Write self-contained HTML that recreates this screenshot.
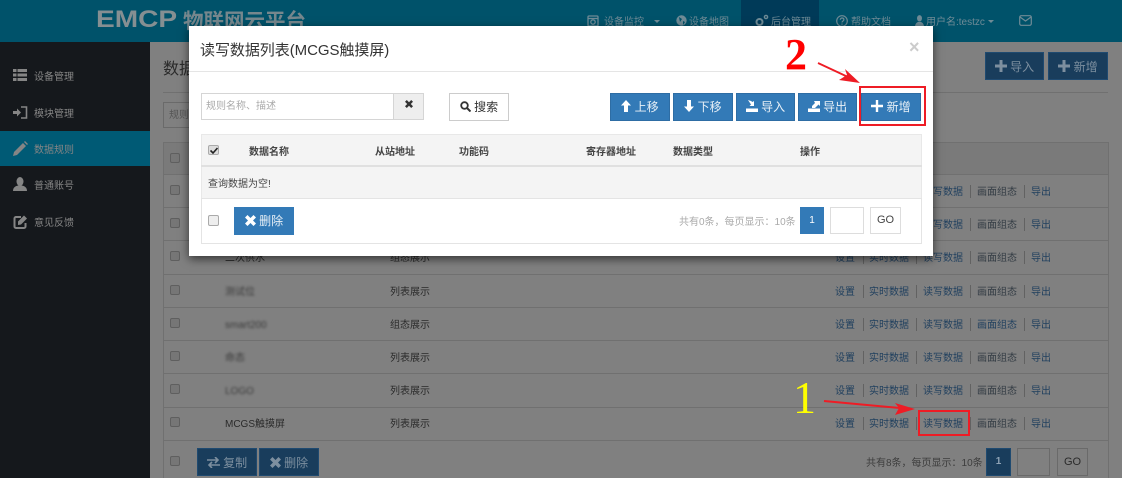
<!DOCTYPE html>
<html><head><meta charset="utf-8"><style>
*{box-sizing:border-box}
html,body{margin:0;padding:0}
body{width:1122px;height:478px;overflow:hidden;position:relative;background:#808080;font-family:"Liberation Sans","Noto Sans CJK SC",sans-serif;font-size:10px;color:#2a2a2a}
.a{position:absolute;white-space:nowrap}
.nav{color:#6f8b96;font-size:10px;top:16px;line-height:14px}
.si{color:#858585;font-size:10px;left:34px;line-height:14px}
.ln{left:164px;width:944px;height:1px;background:#707070}
.cb{width:10px;height:10px;border:1px solid #5f5f5f;background:#767676;border-radius:2px;left:170px}
.r{left:0;width:1122px;height:14px;line-height:14px}
.r span{position:absolute;top:0;color:#1f3f5e}
.r .g{color:#333c44}
.r i{position:absolute;top:-1px;width:1px;height:13px;background:#626262}
.r .l1{left:835px}.r .l2{left:869px}.r .l3{left:923px}.r .l4{left:977px}.r .l5{left:1031px}
.r .s1{left:863px}.r .s2{left:916px}.r .s3{left:970px}.r .s4{left:1024px}
.r .n{left:225px;color:#2a2a2a}.r .t{left:390px;color:#2a2a2a}
.r .bl{filter:blur(1.2px);color:#3a3a3a}
.bd{background:#193d5c;color:#7d8f9f;height:28px;font-size:12px;text-align:center;line-height:28px;border:1px solid #1f4a70}
.modal{left:189px;top:26px;width:744px;height:230px;background:#fff;box-shadow:0 3px 9px rgba(0,0,0,.6)}
.b{background:#337ab7;color:#e8f0f7;top:93px;height:28px;font-size:12px;line-height:26px;text-align:center;border:1px solid #2e6da4}
.b svg,.bd svg{vertical-align:-1px}
.th{top:146px;line-height:14px;font-weight:bold;color:#444;font-size:10px}
</style></head><body>

<div class="a" style="left:0;top:0;width:1122px;height:42px;background:#00526a"></div>
<div class="a" style="left:741px;top:0;width:78px;height:42px;background:#003a58"></div>
<div class="a" style="left:96px;top:8px;font:bold 24px/24px 'Liberation Sans';color:#858f92;transform:scaleX(1.17);transform-origin:left">EMCP</div>
<div class="a" style="left:183px;top:10px;font-size:20.500px;line-height:24px;font-weight:bold;color:#76878d">物联网云平台</div>
<svg class="a" style="left:587px;top:15px" width="12" height="12" fill="none" stroke="#6f8b96" stroke-width="1.300"><rect x="1" y="1" width="10" height="10" rx="1"/><circle cx="6" cy="7" r="2.200"/><path d="M1 3.500h10"/></svg>
<div class="a nav" style="left:604px">设备监控</div>
<div class="a" style="left:654px;top:20px;border:3px solid transparent;border-top-color:#6f8b96"></div>
<svg class="a" style="left:676px;top:15px" width="11" height="11"><circle cx="5.500" cy="5.500" r="5.200" fill="#6f8b96"/><path d="M3 2l3 2-2 3zM7 6l2 1-2 3z" fill="#00526a"/></svg>
<div class="a nav" style="left:689px">设备地图</div>
<svg class="a" style="left:754px;top:14px" width="15" height="13" fill="none" stroke="#6f8b96" stroke-width="2"><circle cx="5.500" cy="8" r="3"/><circle cx="12" cy="3" r="1.600" stroke-width="1.400"/></svg>
<div class="a nav" style="left:771px">后台管理</div>
<svg class="a" style="left:836px;top:15px" width="12" height="12" fill="none" stroke="#6f8b96" stroke-width="1.200"><circle cx="6" cy="6" r="5.300"/><path d="M4.300 4.700c0-2.300 3.600-2.300 3.600 0 0 1.300-1.900 1.300-1.900 2.800M6 8.500v1.300"/></svg>
<div class="a nav" style="left:851px">帮助文档</div>
<svg class="a" style="left:915px;top:15px" width="9" height="12" fill="#6f8b96"><ellipse cx="4.500" cy="3.300" rx="2.500" ry="3.200"/><path d="M0 12c0-3 1.500-4.500 3-5h3c1.500.5 3 2 3 5z"/></svg>
<div class="a nav" style="left:926px">用户名:testzc</div>
<div class="a" style="left:988px;top:20px;border:3px solid transparent;border-top-color:#6f8b96"></div>
<svg class="a" style="left:1019px;top:15px" width="13" height="11"><rect x=".7" y=".7" width="11.600" height="9.600" rx="1.500" fill="none" stroke="#6f8b96" stroke-width="1.200"/><path d="M1 2l5.500 4L12 2" fill="none" stroke="#6f8b96" stroke-width="1.200"/></svg>

<div class="a" style="left:0;top:42px;width:150px;height:436px;background:#15181c"></div>
<div class="a" style="left:0;top:131px;width:150px;height:35px;background:#005a75"></div>
<svg class="a" style="left:13px;top:69px" width="14" height="12" fill="#858585"><rect width="3.500" height="3"/><rect x="4.500" width="9.500" height="3"/><rect y="4.500" width="3.500" height="3"/><rect x="4.500" y="4.500" width="9.500" height="3"/><rect y="9" width="3.500" height="3"/><rect x="4.500" y="9" width="9.500" height="3"/></svg>
<div class="a si" style="top:71px">设备管理</div>
<svg class="a" style="left:13px;top:106px" width="15" height="13"><path d="M0 5h4V2.500L8 6.500 4 10.500V8H0z" fill="#858585"/><path d="M8 1h5.500v11H8" fill="none" stroke="#858585" stroke-width="1.600"/></svg>
<div class="a si" style="top:108px">模块管理</div>
<svg class="a" style="left:13px;top:141px" width="15" height="15"><path d="M0 15l1-4L10 2l3 3-9 9zM11 1l1-1 3 3-1 1z" fill="#858585"/></svg>
<div class="a si" style="top:144px">数据规则</div>
<svg class="a" style="left:13px;top:177px" width="14" height="14" fill="#858585"><ellipse cx="7" cy="4.500" rx="3.500" ry="4.500"/><path d="M0 14c0-4 3-5 5-5.500h4c2 .5 5 1.500 5 5.500z"/></svg>
<div class="a si" style="top:180px">普通账号</div>
<svg class="a" style="left:13px;top:215px" width="14" height="14"><path d="M8 2H3a1.500 1.500 0 0 0-1.500 1.500v8A1.500 1.500 0 0 0 3 13h8a1.500 1.500 0 0 0 1.500-1.500V8" fill="none" stroke="#858585" stroke-width="2"/><path d="M5 6.500l6-6 3 3-6 6-3 .500z" fill="#858585"/></svg>
<div class="a si" style="top:217px">意见反馈</div>

<div class="a" style="left:163px;top:59px;font-size:16px;line-height:22px;color:#2a2a2a">数据规则</div>
<div class="a" style="left:163px;top:92px;width:945px;height:1px;background:#707070"></div>
<div class="a" style="left:163px;top:102px;width:40px;height:26px;border:1px solid #6a6a6a;color:#555;font-size:10px;line-height:26px;padding-left:5px">规则</div>
<div class="a bd" style="left:985px;top:52px;width:59px"><svg width="12" height="12"><path d="M4.500 0h3v4.500H12v3H7.500V12h-3V7.500H0v-3h4.500z" fill="#7d8f9f"/></svg> 导入</div>
<div class="a bd" style="left:1048px;top:52px;width:60px"><svg width="12" height="12"><path d="M4.500 0h3v4.500H12v3H7.500V12h-3V7.500H0v-3h4.500z" fill="#7d8f9f"/></svg> 新增</div>

<div class="a" style="left:164px;top:142px;width:944px;height:32px;background:#7a7a7a"></div>
<div class="a" style="left:163px;top:142px;width:1px;height:336px;background:#707070"></div>
<div class="a" style="left:1108px;top:142px;width:1px;height:336px;background:#707070"></div>
<div class="a ln" style="top:142px"></div>
<div class="a ln" style="top:174px"></div><div class="a ln" style="top:207px"></div><div class="a ln" style="top:240px"></div><div class="a ln" style="top:274px"></div><div class="a ln" style="top:307px"></div><div class="a ln" style="top:340px"></div><div class="a ln" style="top:373px"></div><div class="a ln" style="top:407px"></div><div class="a ln" style="top:440px"></div>

<div class="a cb" style="top:153px"></div>
<div class="a cb" style="top:185px"></div><div class="a cb" style="top:218px"></div><div class="a cb" style="top:251px"></div><div class="a cb" style="top:285px"></div><div class="a cb" style="top:318px"></div><div class="a cb" style="top:351px"></div><div class="a cb" style="top:384px"></div><div class="a cb" style="top:417px"></div><div class="a cb" style="top:456px"></div>

<div class="a r" style="top:186px"><span class="l3">读写数据</span><span class="l4 g">画面组态</span><span class="l5">导出</span><i class="s3"></i><i class="s4"></i></div>
<div class="a r" style="top:219px"><span class="l3">读写数据</span><span class="l4 g">画面组态</span><span class="l5">导出</span><i class="s3"></i><i class="s4"></i></div>
<div class="a r" style="top:252px"><span class="n">二次供水</span><span class="t">组态展示</span><span class="l1">设置</span><span class="l2">实时数据</span><span class="l3">读写数据</span><span class="l4 g">画面组态</span><span class="l5">导出</span><i class="s1"></i><i class="s2"></i><i class="s3"></i><i class="s4"></i></div>
<div class="a r" style="top:286px"><span class="n bl">测试位</span><span class="t">列表展示</span><span class="l1">设置</span><span class="l2">实时数据</span><span class="l3">读写数据</span><span class="l4 g">画面组态</span><span class="l5">导出</span><i class="s1"></i><i class="s2"></i><i class="s3"></i><i class="s4"></i></div>
<div class="a r" style="top:319px"><span class="n bl">smart200</span><span class="t">组态展示</span><span class="l1">设置</span><span class="l2">实时数据</span><span class="l3">读写数据</span><span class="l4">画面组态</span><span class="l5">导出</span><i class="s1"></i><i class="s2"></i><i class="s3"></i><i class="s4"></i></div>
<div class="a r" style="top:352px"><span class="n bl">命态</span><span class="t">列表展示</span><span class="l1">设置</span><span class="l2">实时数据</span><span class="l3">读写数据</span><span class="l4 g">画面组态</span><span class="l5">导出</span><i class="s1"></i><i class="s2"></i><i class="s3"></i><i class="s4"></i></div>
<div class="a r" style="top:385px"><span class="n bl">LOGO</span><span class="t">列表展示</span><span class="l1">设置</span><span class="l2">实时数据</span><span class="l3">读写数据</span><span class="l4 g">画面组态</span><span class="l5">导出</span><i class="s1"></i><i class="s2"></i><i class="s3"></i><i class="s4"></i></div>
<div class="a r" style="top:418px"><span class="n">MCGS触摸屏</span><span class="t">列表展示</span><span class="l1">设置</span><span class="l2">实时数据</span><span class="l3">读写数据</span><span class="l4 g">画面组态</span><span class="l5">导出</span><i class="s1"></i><i class="s2"></i><i class="s3"></i><i class="s4"></i></div>

<div class="a bd" style="left:197px;top:448px;width:60px"><svg width="13" height="11" fill="none" stroke="#7d8f9f" stroke-width="1.600"><path d="M0 3h10M8 0l3 3-3 3M13 8H3M5 5L2 8l3 3"/></svg> 复制</div>
<div class="a bd" style="left:259px;top:448px;width:60px"><svg width="11" height="11"><path d="M2.500 0L5.500 3 8.500 0 11 2.500 8 5.500l3 3L8.500 11l-3-3-3 3L0 8.500l3-3-3-3z" fill="#7d8f9f"/></svg> 删除</div>
<div class="a" style="left:866px;top:457px;line-height:14px;color:#3d3d3d;font-size:10px">共有8条，每页显示：10条</div>
<div class="a bd" style="left:986px;top:448px;width:25px;color:#8fa3b5;font-size:10px;font-weight:bold;line-height:26px">1</div>
<div class="a" style="left:1017px;top:448px;width:33px;height:28px;border:1px solid #6a6a6a"></div>
<div class="a" style="left:1057px;top:448px;width:31px;height:28px;border:1px solid #6a6a6a;text-align:center;line-height:26px;font-size:11px;color:#2a2a2a">GO</div>

<div class="a modal"></div>
<div class="a" style="left:200px;top:41px;font-size:15px;line-height:20px;color:#333;letter-spacing:-.05px">读写数据列表(MCGS触摸屏)</div>
<div class="a" style="left:909px;top:37px;font-size:18px;line-height:20px;font-weight:bold;color:#ccc">×</div>
<div class="a" style="left:189px;top:71px;width:744px;height:1px;background:#e5e5e5"></div>

<div class="a" style="left:201px;top:93px;width:193px;height:27px;border:1px solid #d5d5d5;color:#aaa;font-size:10px;line-height:26px;padding-left:4px">规则名称、描述</div>
<div class="a" style="left:393px;top:93px;width:31px;height:27px;border:1px solid #d5d5d5;background:#eee;text-align:center;line-height:23px"><svg width="8" height="8"><path d="M1.800 0L4 2.200 6.200 0 8 1.800 5.800 4 8 6.200 6.200 8 4 5.800 1.800 8 0 6.200 2.200 4 0 1.800z" fill="#333"/></svg></div>
<div class="a" style="left:449px;top:93px;width:60px;height:28px;border:1px solid #ccc;text-align:center;line-height:26px;font-size:12px;color:#333"><svg width="11" height="11" style="vertical-align:-1px"><circle cx="4.500" cy="4.500" r="3.300" fill="none" stroke="#333" stroke-width="1.800"/><path d="M7 7l3.500 3.500" stroke="#333" stroke-width="2"/></svg> 搜索</div>

<div class="a b" style="left:610px;width:60px"><svg width="10" height="12"><path d="M5 0l5 5.500H7V12H3V5.500H0z" fill="#fff"/></svg> 上移</div>
<div class="a b" style="left:673px;width:60px"><svg width="10" height="12"><path d="M5 12L0 6.500h3V0h4v6.500h3z" fill="#fff"/></svg> 下移</div>
<div class="a b" style="left:736px;width:59px"><svg width="12" height="12" fill="#fff"><path d="M0 8.500h12V12H0zM2 0l3 1 1.500 1L8 1v5H3.500l1.500-1.500z"/></svg> 导入</div>
<div class="a b" style="left:798px;width:59px"><svg width="12" height="12" fill="#fff"><path d="M0 8.500h12V12H0zM6 1h6v5L10.500 4.500 7 8H4V6l3-3z"/></svg> 导出</div>
<div class="a b" style="left:861px;width:60px"><svg width="12" height="12"><path d="M4.800 0h2.400v4.800H12v2.400H7.200V12H4.800V7.200H0V4.800h4.800z" fill="#fff"/></svg> 新增</div>

<div class="a" style="left:201px;top:134px;width:721px;height:65px;background:#f4f4f4;border:1px solid #e8e8e8"></div>
<div class="a" style="left:201px;top:165px;width:721px;height:2px;background:#e0e0e0"></div>
<div class="a" style="left:201px;top:198px;width:721px;height:46px;border:1px solid #e4e4e4"></div>

<div class="a" style="left:208px;top:145px;width:11px;height:10px;background:#ddd;border:1px solid #aaa;border-radius:2px"><svg class="a" style="left:1px;top:1px" width="8" height="7"><path d="M.5 3.500L3 6 7.500 1" fill="none" stroke="#222" stroke-width="1.600"/></svg></div>
<div class="a th" style="left:249px">数据名称</div>
<div class="a th" style="left:375px">从站地址</div>
<div class="a th" style="left:459px">功能码</div>
<div class="a th" style="left:586px">寄存器地址</div>
<div class="a th" style="left:673px">数据类型</div>
<div class="a th" style="left:800px">操作</div>
<div class="a" style="left:208px;top:178px;line-height:14px;font-size:10px;color:#444">查询数据为空!</div>
<div class="a" style="left:208px;top:215px;width:11px;height:11px;background:#eee;border:1px solid #aaa;border-radius:2px"></div>
<div class="a" style="left:234px;top:207px;width:60px;height:28px;background:#337ab7;color:#e8f0f7;text-align:center;line-height:28px;font-size:12px"><svg width="11" height="11" style="vertical-align:-1px"><path d="M2.500 0L5.500 3 8.500 0 11 2.500 8 5.500l3 3L8.500 11l-3-3-3 3L0 8.500l3-3-3-3z" fill="#fff"/></svg> 删除</div>
<div class="a" style="left:679px;top:216px;line-height:14px;font-size:10px;color:#aaa">共有0条，每页显示：10条</div>
<div class="a" style="left:800px;top:207px;width:24px;height:27px;background:#337ab7;color:#fff;text-align:center;line-height:27px;font-size:10px">1</div>
<div class="a" style="left:830px;top:207px;width:34px;height:27px;border:1px solid #ddd"></div>
<div class="a" style="left:870px;top:207px;width:31px;height:27px;border:1px solid #ddd;text-align:center;line-height:25px;font-size:11px;color:#444">GO</div>

<div class="a" style="left:859px;top:86px;width:67px;height:40px;border:2px solid #ee1c25"></div>
<div class="a" style="left:918px;top:410px;width:52px;height:26px;border:2px solid #ee1c25"></div>
<div class="a" style="left:785px;top:33px;font:bold 44px/44px 'Liberation Serif';color:#f00">2</div>
<div class="a" style="left:793px;top:375px;font:46px/46px 'Liberation Serif';color:#ff0">1</div>
<svg class="a" style="left:0;top:0" width="1122" height="478">
<path d="M818 63L848 77" stroke="#ee1c25" stroke-width="1.800"/><path d="M860 83L845 69 847 75 839 80z" fill="#ee1c25"/>
<path d="M824 401L900 408" stroke="#ee1c25" stroke-width="2"/><path d="M915 409L895 403 899 408 895 415z" fill="#ee1c25"/>
</svg>
</body></html>
